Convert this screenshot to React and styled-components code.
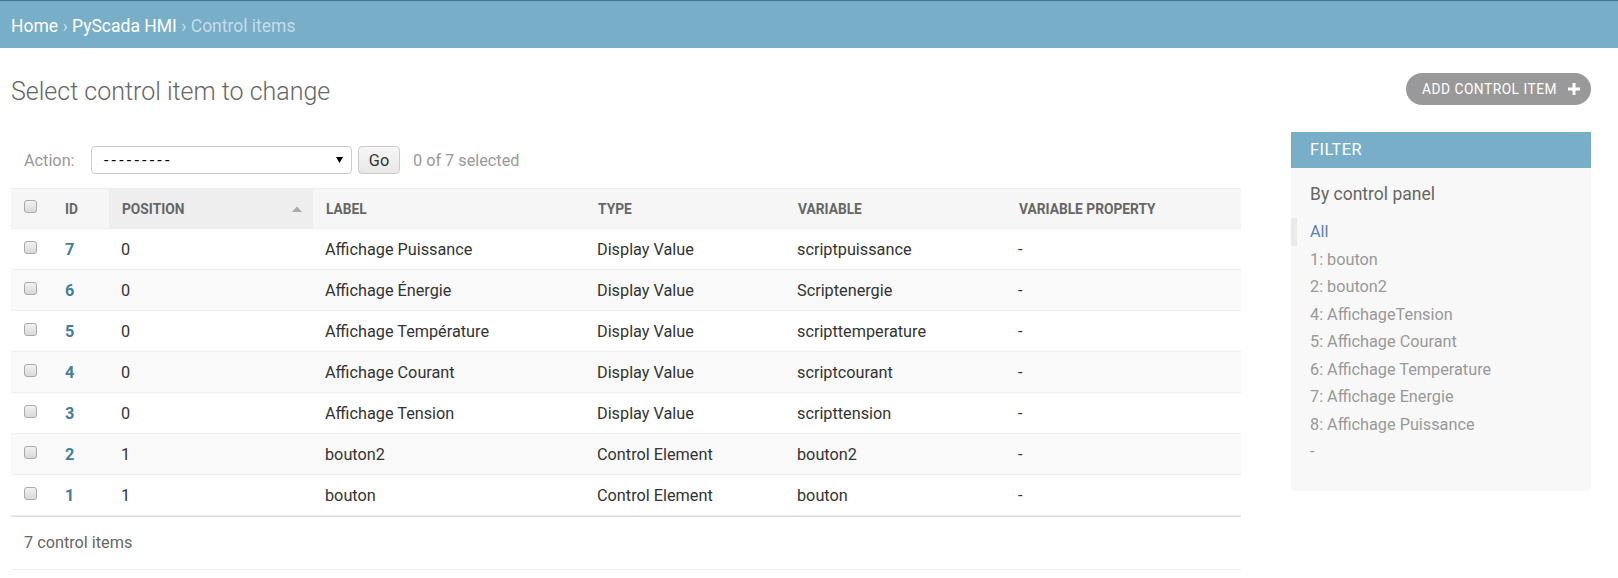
import React from 'react'
import styled, { createGlobalStyle } from 'styled-components'

const GlobalStyle = createGlobalStyle`
    body {
        margin: 0;
        background: #fff;
        color: #333;
        font-family: Roboto, "Liberation Sans", Arial, sans-serif;
    }
`;

const Breadcrumbs = styled.div`
    height: 45px;
    padding: 2px 11px 0;
    border-top: 1px solid #417690;
    background: #79aec8;
    display: flex;
    align-items: center;
    font-size: 17.5px;
    color: #c4dce8;
    white-space: pre;
`;

const Crumb = styled.a`
    color: #fff;
    text-decoration: none;
`;

const Content = styled.div`
    padding: 0 27px 0 11px;
`;

const TitleRow = styled.div`
    height: 84px;
    display: flex;
    align-items: center;
    justify-content: space-between;
`;

const Title = styled.h1`
    margin: 3px 0 0;
    font-size: 25px;
    font-weight: 300;
    line-height: 30px;
    color: #666;
`;

const AddButton = styled.a`
    height: 32px;
    margin-bottom: 2px;
    padding: 0 11px 0 16px;
    display: flex;
    align-items: center;
    gap: 11px;
    border-radius: 16px;
    background: #999;
    color: #fff;
    font-size: 13.75px;
    letter-spacing: 0.5px;
    text-transform: uppercase;
    text-decoration: none;
`;

const Columns = styled.div`
    display: flex;
    align-items: flex-start;
    gap: 50px;
`;

const Main = styled.div`
    flex: 1;
    min-width: 0;
`;

const Actions = styled.div`
    height: 56px;
    padding: 0 13px;
    display: flex;
    align-items: center;
    font-size: 16.25px;
    color: #999;
`;

const ActionLabel = styled.label`
    width: 67px;
`;

const SelectWrap = styled.div`
    position: relative;
    width: 261px;
    height: 28px;
`;

const Select = styled.select`
    width: 100%;
    height: 100%;
    margin: 0;
    padding: 0 0 0 12px;
    border: 1px solid #ccc;
    border-radius: 4px;
    background: #fff;
    appearance: none;
    color: #000;
    font-family: inherit;
    font-size: 16px;
    letter-spacing: 3.2px;
`;

const SelectArrow = styled.svg`
    position: absolute;
    right: 9px;
    top: 11px;
    pointer-events: none;
`;

const GoButton = styled.button`
    width: 42px;
    height: 28px;
    margin-left: 6px;
    padding: 0;
    border: 1px solid #ccc;
    border-radius: 4px;
    background: linear-gradient(#f6f6f6, #e8e8e8);
    color: #333;
    font-family: inherit;
    font-size: 16.25px;
`;

const Counter = styled.span`
    margin-left: 13px;
`;

const Table = styled.table`
    width: 100%;
    border-collapse: collapse;
    table-layout: fixed;
    font-size: 16.25px;
`;

const HeadCell = styled.th`
    height: 39px;
    padding: 0 ${(p) => (p.$sorted ? '11px' : '13px')} 0 13px;
    border-top: 1px solid #eee;
    border-bottom: 1px solid #eee;
    background: ${(p) => (p.$sorted ? '#eee' : '#f6f6f6')};
    color: #666;
    font-size: 13.75px;
    font-weight: 700;
    text-align: left;
    text-transform: uppercase;
    white-space: nowrap;
`;

const SortHead = styled.div`
    display: flex;
    align-items: center;
    justify-content: space-between;
`;

const Row = styled.tr`
    background: ${(p) => (p.$alt ? '#f9f9f9' : '#fff')};
`;

const Cell = styled.td`
    height: 40px;
    padding: 0 12px;
    border-bottom: 1px solid #eee;
    color: #333;
    white-space: nowrap;
`;

const IdCell = styled.th`
    height: 40px;
    padding: 0 13px;
    border-bottom: 1px solid #eee;
    text-align: left;
    font-weight: 700;
`;

const IdLink = styled.a`
    color: #447e9b;
    text-decoration: none;
`;

const CheckCell = styled.td`
    padding: 0 0 0 13px;
    border-bottom: 1px solid #eee;
    border-top: ${(p) => (p.$head ? '1px solid #eee' : '0')};
    background: ${(p) => (p.$head ? '#f6f6f6' : 'transparent')};
`;

const Check = styled.input`
    display: block;
    width: 13px;
    height: 13px;
    margin: ${(p) => (p.$head ? '-4px 0 0' : '-3px 0 0')};
    border: 1px solid #aaa;
    border-radius: 3px;
    background: linear-gradient(#f2f2f2, #d9d9d9);
    appearance: none;
`;

const Footer = styled.p`
    margin: 0;
    padding: 12px 13px;
    line-height: 28px;
    border-top: 1px solid #ddd;
    border-bottom: 1px solid #eee;
    color: #666;
    font-size: 16.25px;
`;

const Filter = styled.div`
    width: 300px;
    flex-shrink: 0;
    background: #f8f8f8;
`;

const FilterTitle = styled.h2`
    height: 36px;
    margin: 0;
    padding: 0 19px;
    background: #79aec8;
    color: #fff;
    font-size: 16.25px;
    font-weight: 400;
    letter-spacing: 0.5px;
    line-height: 36px;
    text-transform: uppercase;
`;

const FilterHeading = styled.h3`
    margin: 16px 0 0;
    padding: 0 19px;
    color: #666;
    font-size: 17.5px;
    font-weight: 400;
    line-height: 20px;
`;

const FilterList = styled.ul`
    margin: 14px 0 6px;
    padding: 0 19px 19px;
    list-style: none;
`;

const FilterItem = styled.li`
    line-height: 27.5px;
    font-size: 16.25px;
    ${(p) => p.$selected && `
        margin-left: -19px;
        padding-left: 13px;
        border-left: 6px solid #eaeaea;
    `}
`;

const FilterLink = styled.a`
    display: block;
    color: ${(p) => (p.$selected ? '#5b80b2' : '#999')};
    text-decoration: none;
`;

const columns = [
    { key: 'id', label: 'ID', width: 57 },
    { key: 'position', label: 'Position', width: 204, sorted: true },
    { key: 'label', label: 'Label', width: 272 },
    { key: 'type', label: 'Type', width: 200 },
    { key: 'variable', label: 'Variable', width: 221 },
    { key: 'property', label: 'Variable property', width: 235 },
];

const rows = [
    { id: 7, position: 0, label: 'Affichage Puissance', type: 'Display Value', variable: 'scriptpuissance' },
    { id: 6, position: 0, label: 'Affichage Énergie', type: 'Display Value', variable: 'Scriptenergie' },
    { id: 5, position: 0, label: 'Affichage Température', type: 'Display Value', variable: 'scripttemperature' },
    { id: 4, position: 0, label: 'Affichage Courant', type: 'Display Value', variable: 'scriptcourant' },
    { id: 3, position: 0, label: 'Affichage Tension', type: 'Display Value', variable: 'scripttension' },
    { id: 2, position: 1, label: 'bouton2', type: 'Control Element', variable: 'bouton2' },
    { id: 1, position: 1, label: 'bouton', type: 'Control Element', variable: 'bouton' },
];

const filters = [
    'All',
    '1: bouton',
    '2: bouton2',
    '4: AffichageTension',
    '5: Affichage Courant',
    '6: Affichage Temperature',
    '7: Affichage Energie',
    '8: Affichage Puissance',
    '-',
];

const PlusIcon = () => (
    <svg width="12" height="12" viewBox="0 0 12 12">
        <rect x="4.5" y="0" width="3" height="12" fill="#fff" />
        <rect x="0" y="4.5" width="12" height="3" fill="#fff" />
    </svg>
);

const SortIcon = () => (
    <svg width="10" height="6" viewBox="0 0 10 6">
        <polygon points="0,6 5,0.5 10,6" fill="#aaa" />
    </svg>
);

export default function App() {
    return (
        <>
            <GlobalStyle />
            <Breadcrumbs>
                <Crumb href="#">Home</Crumb>{' › '}
                <Crumb href="#">PyScada HMI</Crumb>{' › Control items'}
            </Breadcrumbs>
            <Content>
                <TitleRow>
                    <Title>Select control item to change</Title>
                    <AddButton href="#">Add control item <PlusIcon /></AddButton>
                </TitleRow>
                <Columns>
                    <Main>
                        <Actions>
                            <ActionLabel>Action:</ActionLabel>
                            <SelectWrap>
                                <Select defaultValue="">
                                    <option value="">---------</option>
                                    <option value="delete">Delete selected control items</option>
                                </Select>
                                <SelectArrow width="7" height="6" viewBox="0 0 7 6">
                                    <polygon points="0,0 7,0 3.5,6" fill="#000" />
                                </SelectArrow>
                            </SelectWrap>
                            <GoButton>Go</GoButton>
                            <Counter>0 of 7 selected</Counter>
                        </Actions>
                        <Table>
                            <colgroup>
                                <col style={{ width: 41 }} />
                                {columns.map((c) => <col key={c.key} style={{ width: c.width }} />)}
                            </colgroup>
                            <thead>
                                <tr>
                                    <CheckCell as="th" $head><Check type="checkbox" $head /></CheckCell>
                                    {columns.map((c) => (
                                        <HeadCell key={c.key} $sorted={c.sorted}>
                                            {c.sorted ? (
                                                <SortHead>{c.label}<SortIcon /></SortHead>
                                            ) : c.label}
                                        </HeadCell>
                                    ))}
                                </tr>
                            </thead>
                            <tbody>
                                {rows.map((r, i) => (
                                    <Row key={r.id} $alt={i % 2 === 1}>
                                        <CheckCell><Check type="checkbox" /></CheckCell>
                                        <IdCell><IdLink href="#">{r.id}</IdLink></IdCell>
                                        <Cell>{r.position}</Cell>
                                        <Cell>{r.label}</Cell>
                                        <Cell>{r.type}</Cell>
                                        <Cell>{r.variable}</Cell>
                                        <Cell>-</Cell>
                                    </Row>
                                ))}
                            </tbody>
                        </Table>
                        <Footer>7 control items</Footer>
                    </Main>
                    <Filter>
                        <FilterTitle>Filter</FilterTitle>
                        <FilterHeading>By control panel</FilterHeading>
                        <FilterList>
                            {filters.map((f, i) => (
                                <FilterItem key={f} $selected={i === 0}>
                                    <FilterLink href="#" $selected={i === 0}>{f}</FilterLink>
                                </FilterItem>
                            ))}
                        </FilterList>
                    </Filter>
                </Columns>
            </Content>
        </>
    );
}
